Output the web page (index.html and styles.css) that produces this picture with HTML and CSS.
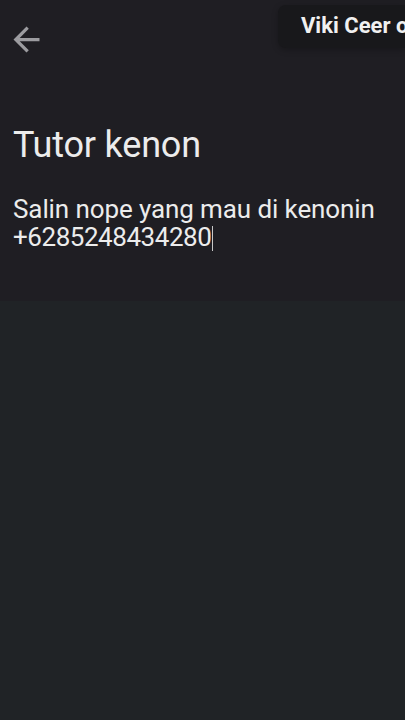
FILE: index.html
```html
<!DOCTYPE html>
<html lang="id">
<head>
<meta charset="utf-8">
<link rel="stylesheet" href="styles.css">
</head>
<body>
<div class="screen">
  <section class="editor">
    <header class="topbar">
      <svg class="back" viewBox="0 0 24 24" width="39" height="39"><path d="M20 11H7.83l5.59-5.59L12 4l-8 8 8 8 1.41-1.41L7.83 13H20v-2z" fill="currentColor"/></svg>
    </header>
    <main class="note">
      <h1 class="title">Tutor kenon</h1>
      <p class="body">Salin nope yang mau di kenonin<br><span class="phone">+6285248434280</span><span class="caret"></span></p>
    </main>
  </section>
  <section class="rest"></section>
  <div class="tag">Viki Ceer o</div>
</div>
</body>
</html>
```
FILE: styles.css
```css
html, body { margin: 0; padding: 0; }
body { width: 405px; height: 720px; overflow: hidden; font-family: Roboto, "Noto Sans", sans-serif; }
.screen {
  position: relative;
  width: 405px; height: 720px;
  display: flex; flex-direction: column;
  background: #202326;
  color: #ececec;
}
.editor { height: 301px; background: #1f1e23; }
.rest { flex: 1; background: #202326; }
.topbar { height: 80px; display: flex; align-items: flex-start; padding: 20px 0 0 7px; box-sizing: border-box; }
.back { color: #9c9ca0; }
.note { padding: 0 13px; }
.title { margin: 43px 0 0; font-size: 36px; font-weight: 400; line-height: 44px; color: #ececec; letter-spacing: -0.2px; }
.body { margin: 28px 0 0; font-size: 26px; line-height: 28px; color: #ececec; letter-spacing: -0.1px; }
.phone { letter-spacing: -0.45px; }
.caret { display: inline-block; width: 1px; height: 25px; background: #c8c8c8; vertical-align: -5px; margin-left: 1px; }
.tag {
  position: absolute; top: 5px; right: 0; left: 278px;
  height: 43px; box-sizing: border-box; padding: 8px 0 0 23px;
  background: #18181b; border-radius: 8px 0 0 8px;
  box-shadow: 0 2px 6px rgba(0,0,0,0.25);
  color: #f0f0f0; font-weight: 700; font-size: 22px; white-space: nowrap; overflow: hidden;
}
```
